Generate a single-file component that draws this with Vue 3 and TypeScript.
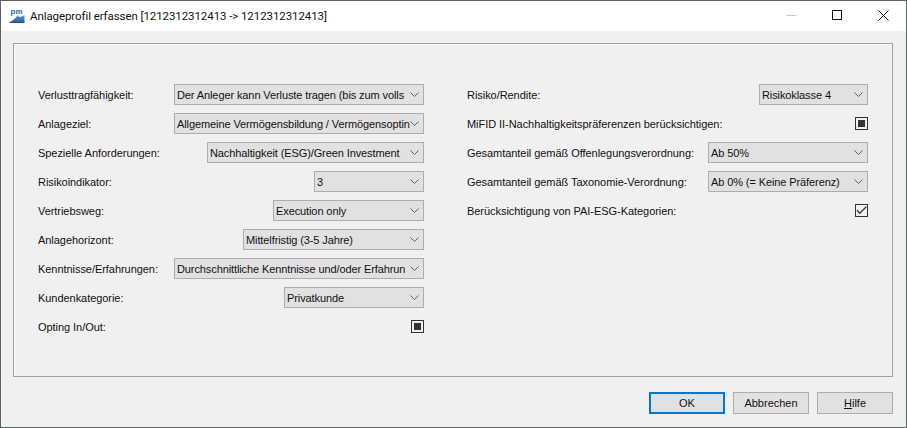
<script setup lang="ts">
interface Field {
  label: string
  value?: string
  width?: number
  check?: 'square' | 'tick'
}

const left: Field[] = [
  { label: 'Verlusttragfähigkeit:', value: 'Der Anleger kann Verluste tragen (bis zum volls', width: 250 },
  { label: 'Anlageziel:', value: 'Allgemeine Vermögensbildung / Vermögensoptin', width: 250 },
  { label: 'Spezielle Anforderungen:', value: 'Nachhaltigkeit (ESG)/Green Investment', width: 217 },
  { label: 'Risikoindikator:', value: '3', width: 110 },
  { label: 'Vertriebsweg:', value: 'Execution only', width: 151 },
  { label: 'Anlagehorizont:', value: 'Mittelfristig (3-5 Jahre)', width: 181 },
  { label: 'Kenntnisse/Erfahrungen:', value: 'Durchschnittliche Kenntnisse und/oder Erfahrun', width: 250 },
  { label: 'Kundenkategorie:', value: 'Privatkunde', width: 140 },
  { label: 'Opting In/Out:', check: 'square' },
]

const right: Field[] = [
  { label: 'Risiko/Rendite:', value: 'Risikoklasse 4', width: 109 },
  { label: 'MiFID II-Nachhaltigkeitspräferenzen berücksichtigen:', check: 'square' },
  { label: 'Gesamtanteil gemäß Offenlegungsverordnung:', value: 'Ab 50%', width: 160 },
  { label: 'Gesamtanteil gemäß Taxonomie-Verordnung:', value: 'Ab 0% (= Keine Präferenz)', width: 160 },
  { label: 'Berücksichtigung von PAI-ESG-Kategorien:', check: 'tick' },
]

const columns = [left, right]
</script>

<template>
  <div class="window">
    <header class="titlebar">
      <svg class="logo" width="16" height="16" viewBox="0 0 16 16">
        <defs>
          <linearGradient id="wave" x1="0" y1="0" x2="0" y2="1">
            <stop offset="0" stop-color="#6f9fd4" />
            <stop offset="1" stop-color="#1b56a0" />
          </linearGradient>
        </defs>
        <text x="1.5" y="6" class="logo-text">pm</text>
        <path d="M0.5 15V14C4 13 6 10 8.5 7.5C10 9.5 12 9 15.5 7V15Z" fill="url(#wave)" />
      </svg>
      <span class="title">Anlageprofil erfassen [1212312312413 -&gt; 1212312312413]</span>
      <div class="caption">
        <span class="cap-btn"><svg width="11" height="11" viewBox="0 0 11 11"><path d="M.5 5.5H10.5" stroke="#c8c8c8" fill="none" /></svg></span>
        <span class="cap-btn"><svg width="11" height="11" viewBox="0 0 11 11"><rect x=".5" y=".5" width="9" height="9" stroke="#111" fill="none" /></svg></span>
        <span class="cap-btn"><svg width="11" height="11" viewBox="0 0 11 11"><path d="M.5 .5L10.5 10.5M10.5 .5L.5 10.5" stroke="#111" fill="none" /></svg></span>
      </div>
    </header>

    <main class="body">
      <section class="panel">
        <div v-for="(col, i) in columns" :key="i" class="column" :class="i === 0 ? 'col-left' : 'col-right'">
          <div v-for="f in col" :key="f.label" class="row">
            <span class="label">{{ f.label }}</span>
            <div v-if="f.value" class="combo" :style="{ width: f.width + 'px' }">
              <span class="combo-text">{{ f.value }}</span>
              <svg class="chev" width="9" height="5" viewBox="0 0 9 5"><path d="M.5 .5L4.5 4.5L8.5 .5" stroke="#606060" fill="none" /></svg>
            </div>
            <span v-else-if="f.check === 'square'" class="check"><i class="mark"></i></span>
            <span v-else class="check tick">
              <svg width="11" height="11" viewBox="0 0 11 11"><path d="M1 5L3.7 8.3L10.3 1.7" stroke="#333" stroke-width="1.3" fill="none" /></svg>
            </span>
          </div>
        </div>
      </section>

      <footer class="actions">
        <button class="btn default">OK</button>
        <button class="btn">Abbrechen</button>
        <button class="btn"><u>H</u>ilfe</button>
      </footer>
    </main>
  </div>
</template>

<style scoped>
.window {
  width: 907px;
  height: 428px;
  box-sizing: border-box;
  border: 1px solid #5a6464;
  display: flex;
  flex-direction: column;
  background: #f0f0f0;
  color: #111;
  font-family: "Liberation Sans", sans-serif;
  font-size: 11px;
}
.titlebar {
  height: 30px;
  flex: none;
  background: #fff;
  display: flex;
  align-items: center;
  padding-left: 8px;
}
.logo {
  flex: none;
  margin-right: 5px;
}
.logo-text {
  font-family: "Liberation Sans", sans-serif;
  font-size: 8px;
  font-weight: 700;
  fill: #2468b4;
}
.title {
  font-size: 11.5px;
  letter-spacing: -0.08px;
  white-space: nowrap;
  font-family: Roboto, sans-serif;
}
.caption {
  margin-left: auto;
  display: flex;
  align-self: flex-start;
}
.cap-btn {
  width: 46px;
  height: 28px;
  display: flex;
  align-items: center;
  justify-content: center;
}
.body {
  flex: 1;
  display: flex;
  flex-direction: column;
  padding: 12px 13px 13px 12px;
  min-height: 0;
}
.panel {
  height: 334px;
  box-sizing: border-box;
  border: 1px solid #a0a0a0;
  box-shadow: inset 1px 1px 0 #fff;
  padding: 40px 24px 0 24px;
  display: flex;
  gap: 43px;
}
.column {
  display: flex;
  flex-direction: column;
  gap: 8px;
}
.col-left { width: 386px; }
.col-right { width: 401px; }
.row {
  height: 21px;
  display: flex;
  align-items: center;
  justify-content: space-between;
}
.label {
  white-space: nowrap;
  letter-spacing: -0.05px;
}
.combo {
  height: 21px;
  box-sizing: border-box;
  border: 1px solid #adadad;
  background: #e1e1e1;
  display: flex;
  align-items: center;
  padding-left: 2px;
  position: relative;
  overflow: hidden;
}
.combo-text {
  white-space: nowrap;
  letter-spacing: -0.1px;
}
.chev {
  position: absolute;
  right: 4px;
  top: 7px;
}
.check {
  width: 13px;
  height: 13px;
  box-sizing: border-box;
  border: 1px solid #333;
  background: #f0f0f0;
  display: flex;
  align-items: center;
  justify-content: center;
}
.mark {
  width: 7px;
  height: 7px;
  background: #333;
}
.actions {
  margin-top: 15px;
  display: flex;
  justify-content: flex-end;
  gap: 8px;
}
.btn {
  width: 76px;
  height: 22px;
  box-sizing: border-box;
  border: 1px solid #adadad;
  background: #e1e1e1;
  color: #111;
  font: inherit;
  padding: 0;
}
.btn.default {
  border: 2px solid #0078d7;
}
</style>
